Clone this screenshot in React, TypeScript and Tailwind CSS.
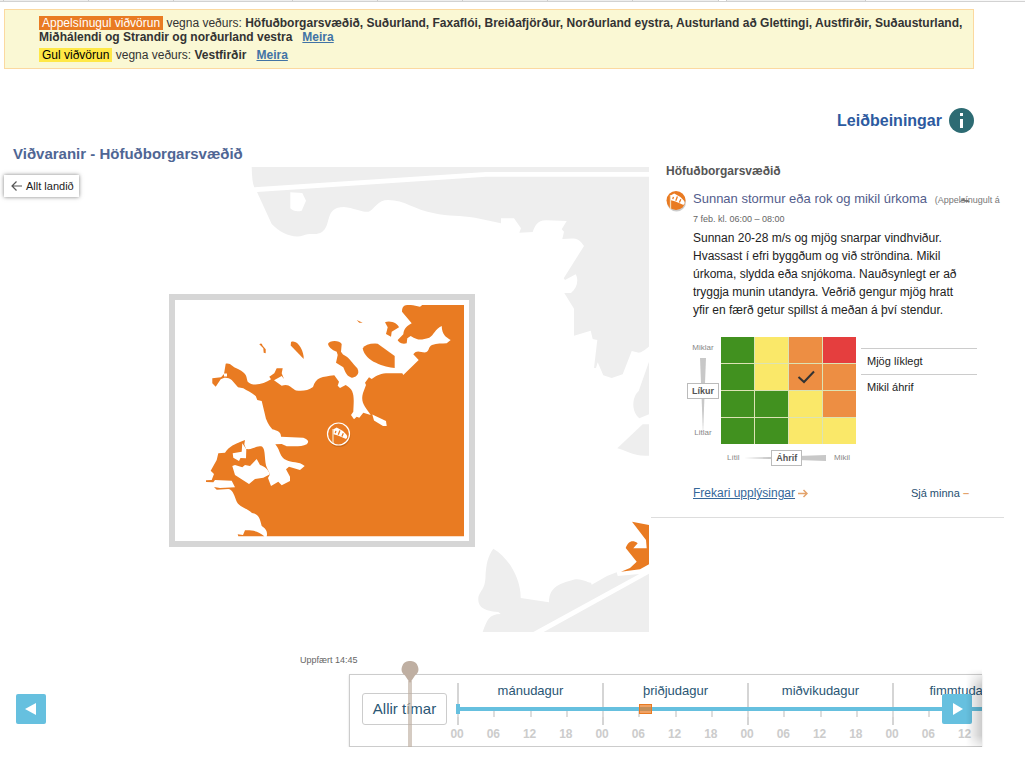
import { useState } from "react";
import clsx from "clsx";

const DAYS = ["mánudagur", "þriðjudagur", "miðvikudagur", "fimmtudagur"];
const HOURS = ["00", "06", "12", "18"];

// risk matrix, top row = most likely
const MATRIX = [
  ["g", "y", "o", "r"],
  ["g", "y", "o", "o"],
  ["g", "g", "y", "o"],
  ["g", "g", "y", "y"],
];

const RISK_COLORS: Record<string, string> = {
  g: "bg-[#41911f]",
  y: "bg-[#fae869]",
  o: "bg-[#ed8e43]",
  r: "bg-[#e53e3e]",
};

const TABS = [
  "w-[4px]",
  "w-[85px]",
  "w-[85px]",
  "w-[119px]",
  "w-[85px]",
  "w-[85px]",
  "w-[85px]",
  "w-[85px]",
  "w-[86px]",
];

function Windsock() {
  return (
    <g>
      <path d="M-5.500 -5V9" stroke="#f5dcb8" strokeWidth="1.300" />
      <path d="M-5 -4.800L-1.800 -6.400Q4 -4 8 .8C9.200 2.400 8.800 4.800 7 4.800L-.5 1.600L-5 .2Z" fill="#fff" />
      <path d="M-2.600 -3.200L-3.200 -.8M1.400 -3.400L-.2 .8M4.800 -.8L3.400 2.600" stroke="#e97b22" strokeWidth="1.300" />
    </g>
  );
}

function TopTabs() {
  return (
    <div className="-mt-1 flex h-[6px] overflow-hidden border-b border-[#d2d2d2] bg-[#f8f8f8]">
      {TABS.map((w, i) => (
        <div key={i} className={clsx("h-full shrink-0 border-r border-[#ccc] bg-[#eee]", w)} />
      ))}
      <div className="w-[8px] shrink-0 border-r border-[#ccc] bg-white" />
      <div className="w-[139px] shrink-0 border-r border-[#ccc] bg-[#eee]" />
    </div>
  );
}

function Alerts() {
  return (
    <div className="mt-[7px] mr-[51px] ml-1 border border-[#fbd9a0] bg-[#faf8d4] py-[6px] pl-[34px] pr-2 text-[12px] leading-[14px] text-[#333]">
      <p>
        <span className="bg-[#e97b22] px-[3px] text-white">Appelsínugul viðvörun</span> vegna veðurs:{" "}
        <b>
          Höfuðborgarsvæðið, Suðurland, Faxaflói, Breiðafjörður, Norðurland eystra, Austurland að Glettingi,
          Austfirðir, Suðausturland, Miðhálendi og Strandir og norðurland vestra
        </b>
        <a href="#orange" className="ml-[10px] font-bold text-[#4173a5] underline">
          Meira
        </a>
      </p>
      <p className="mt-1">
        <span className="bg-[#ffe846] px-[3px] text-black">Gul viðvörun</span> vegna veðurs: <b>Vestfirðir</b>
        <a href="#yellow" className="ml-[10px] font-bold text-[#4173a5] underline">
          Meira
        </a>
      </p>
    </div>
  );
}

function RegionMap() {
  return (
    <svg viewBox="0 167 649 465" className="block h-auto w-full" role="img" aria-label="Höfuðborgarsvæðið">
      <g fill="#eeeeee">
        <path d="M251.700 167H649V172H486L254.300 187.300Q252 183 251.700 167Z" />
        <path
          fillRule="evenodd"
          d="M257 192L486 176.700H649V346.500C645 350 641 353 638 352.600L631.700 351L622.700 374.300L611.700 378L603.300 375.300L597.700 362.300L596 368H594L597.300 340L592.700 339L590.700 330.700L574 335.700V308.700L564.300 293H571C577 288 579 280 575.700 274.300L565 280L563.700 278.300L584 246C580 240 577 238.500 572 238.500L562.300 239L564 231.700L561.700 229.300L566.700 221L546.700 220.300C537 220 535 226 532.700 232L519.300 232.700L521 228.300L514 218.300H501V223.300L475 217.700C460 215 450 217 433 213C415 210 405 200 388 200C378 200 375 208 370 211C366 214 355 208 344 207C324 207 332 225 322 232C316 236 311 232 303 235.500C294 239 280 233 271.700 224Z M290.300 192.300L302.300 193L306 200.700L301.700 210.700C297 212 293 211 290.300 208.300Z"
        />
        <path d="M649 361.700L638.700 391C632 397 631 411 639.300 418.300L649 414.300Z" />
        <path d="M649 424.300H642.700L617.300 448.300C625 450 634 457 649 455.700Z" />
        <path d="M493.300 548.700C508 557 521 578 520.700 598L549 602.300C549 586 562 583 571 580.500C580 577 585 582 591 582.700L591.700 584.700L607 576L616.700 572.300L617.700 576L639.300 574L533.300 632H482.700C487 620 489 614 500.700 614L498.300 612C482 611 478 606 478.300 598C480 590 485 590 485.500 577C486 564 488 556 493.300 548.700Z" />
        <path d="M649 573.700L543.700 632H649Z" />
      </g>
      <path
        fill="#e97b22"
        d="M632 521.700L649 525V564.300L640 569.300L621 571.700L630 568L636.700 561.700L625.700 548C628 542 632 539 637.700 543.300L633.300 548.300H646.700L646 540Z"
      />

      {/* Inset with the capital region */}
      <rect x="172" y="297" width="300" height="247" fill="#fff" stroke="#d6d6d6" strokeWidth="6" />
      <g fill="#e97b22">
        <path d="M422.300 305H464V536.300H266.700C268 531 265 528 261.700 526C260 519 259 514 252 513C247 508 238 507 236 500C234 494 232 489 228.300 489L216.700 489.700L214 487L220 488L235 487.300L231.700 480.700L215 480L213.300 482.300L206 482V480.300L211.700 480L214 474L210.700 470.700L216.700 460L218.300 453.300L225 452.700C229 446 236 444 240 442L245 440L244.300 444.300L246 449C254 450 256 445 262 446.500C266 449 264 462 267 468L270 474.300L268 478L271 486L278.300 481.700L281.700 485.300L290 481V476.700L286 469.300L289 466.700L300 470L304.700 466C299 461 291 463 286.700 460.300C279 457 281 451 275.300 444.300L281.700 444L286.700 446.300C294 446 302 447 306.700 444.300C309 442 309 440 303.300 437.700L281 436.700C281 432 278 431 272.300 429.300C267 423 267 420 266 419L264.300 411.700L261.700 401L257.300 400L255.700 396C251 392 247 391 243.300 388.300L238 387.300L231.700 380C228 377 224 377 220.700 379.300L215.700 386.700L212.300 383.300V378.300L221 377.300L224 374L225.700 363.700C232 363 231 367 238 369C248 374 246 377 247.700 381.700C253 387 264 384 271 379.300L269.300 376.700L274.300 373.300L276.700 368.300L282.700 368.300L281.700 373.300L284 379L281.700 376L274 380.300L281.700 385.700C289 383 291 388 296 390.500C302 391 308 391 313 387C316 377 322 377 334.300 375.300L339 381.700L337.700 385.700L340 388L345.700 385C355 390 354 397 353.300 411.700L351 415L354 419.300L356.700 416.700L359.300 417.700L363.300 412.700L370.700 415C366 408 360 403 363 393L366 385L365 382.700L369 377.300L371.700 379C377 375 382 373 390 373.300H402.300L403.300 375L418.700 360L413.300 354.300C417 349 421 353 426 352.300C430 350 428 347 432 345C437 343 442 344 446.700 343.300L450.700 340C446 337 442 335 441.700 326C435 329 434 335 429.300 337.700C421 340 419 341 410.700 336L407.300 338.300L406.700 343.300C401 345 398 341 397.700 340L403.300 334.300C404 328 407 326 411.700 323.300L402 311.700C402 304 407 305 413 305.300L420 306.700Z" />
        <path d="M237.700 534.300L243 535L245 530.300C252 530 259 531 264.300 536.300H238.300Z" />
        <path d="M259.300 344.300Q262 342.500 262.500 345.500L265.700 349.300V353.300L263.700 352.700L263.300 348.300Z" />
        <path d="M291 342C297 339 304 350 303.700 359L290.700 345.500Z" />
        <path d="M328 344C329 340 340 340 341.700 344L341 351.700L343 354.500C349 357 353 364 357.300 368.300C361 375 354 378 351.700 377.700C347 376 346 374 343.300 367.300L336 362.700L337.700 355L336.700 351.700Q329 349 328 344Z" />
        <path d="M362.700 348.300Q366 343 377.700 343.700L394.700 356V368C385 367 365 362 362.700 348.300Z" />
        <path d="M385 322.300C391 320 398 324 399 327.300L391.700 331.700L391 336.700L386 334L387.700 327.300Z" />
        <path d="M356.700 320L362.700 322.700L359.300 322.700Z" />
      </g>
      <g fill="#fff">
        <path d="M242.300 443.300L246.300 449.300L246 458.300L240.500 458L239 461L233.300 457.700L232.700 453.300L241.700 451.700Z" />
        <path d="M232.300 466L235 465L242.300 467.300L245 465L250 466L256.700 459L260 465C264 466 268 469 270 474.300L263.300 477.700L255 479L249 484L235 475Z" />
        <path d="M372.300 414.500L386 421L386.700 426H383L374 420.500Z" />
        <path d="M224 373.500H227V376.500H224Z" />
      </g>
      <circle cx="339" cy="435.500" r="11.500" fill="#a85008" opacity=".4" />
      <circle cx="338.500" cy="434" r="11" fill="#e97b22" stroke="#fff" strokeWidth="1.200" />
      <g transform="translate(338.500 434)">
        <Windsock />
      </g>
    </svg>
  );
}

function RiskMatrix() {
  return (
    <div className="mt-[18px] ml-[35px] flex items-start">
      <div>
        <div className="flex gap-px">
          <div className="relative flex h-[107px] w-[34px] flex-col items-center justify-between py-[6px] text-[8px] leading-[10px] text-[#888]">
            <span>Miklar</span>
            <svg width="6" height="76" viewBox="0 0 6 76" className="absolute top-[21px]">
              <path d="M0 0H6L3 76Z" fill="#c8c8c8" />
            </svg>
            <b className="relative border border-[#bbb] bg-white px-1 py-[2px] text-[9px] text-[#555]">Líkur</b>
            <span className="relative">Litlar</span>
          </div>
          <div className="grid h-[107px] w-[135px] grid-cols-4 grid-rows-4 gap-px bg-[#dce3b4]">
            {MATRIX.map((row, y) =>
              row.map((risk, x) => (
                <div key={`${y}-${x}`} className={clsx("flex items-center justify-center", RISK_COLORS[risk])}>
                  {y === 1 && x === 2 && (
                    <svg width="18" height="14" viewBox="0 0 18 14" fill="none" stroke="#333" strokeWidth="2">
                      <path d="M1.500 7L7 12L17 1.500" />
                    </svg>
                  )}
                </div>
              )),
            )}
          </div>
        </div>
        <div className="relative mt-[6px] ml-[41px] flex h-4 w-[123px] items-center justify-between text-[8px] leading-[10px] text-[#888]">
          <span>Lítil</span>
          <svg width="82" height="6" viewBox="0 0 82 6" className="absolute left-[17px]">
            <path d="M0 3L82 0V6Z" fill="#c8c8c8" />
          </svg>
          <b className="relative border border-[#bbb] bg-white px-1 py-[2px] text-[9px] text-[#555]">Áhrif</b>
          <span>Mikil</span>
        </div>
      </div>
      <ul className="mt-[11px] ml-[5px] w-[116px] text-[11px] leading-[25px] text-[#222]">
        <li className="border-t border-[#ccc] pl-[6px]">Mjög líklegt</li>
        <li className="border-t border-[#ccc] pl-[6px]">Mikil áhrif</li>
      </ul>
    </div>
  );
}

function WarningPanel({ open, onToggle }: { open: boolean; onToggle: () => void }) {
  return (
    <section className="w-[353px] shrink-0 self-start border-b border-[#ddd]">
      <h2 className="pl-[15px] text-[12px] leading-4 font-bold text-[#555]">Höfuðborgarsvæðið</h2>
      <div className="mt-[10px] flex pl-[14px]">
        <svg width="22" height="24" viewBox="-11 -11 22 24" className="shrink-0">
          <circle cx="0.500" cy="2" r="9.500" fill="#999" opacity=".5" />
          <circle cx="0" cy="0.500" r="9.500" fill="#e97b22" />
          <Windsock />
        </svg>
        <h3 className="relative ml-[6px] text-[13px] leading-5 whitespace-nowrap text-[#535d8c]">
          Sunnan stormur eða rok og mikil úrkoma <small className="ml-1 text-[9px] text-[#777]">(Appelsínugult á</small>
          <svg width="11" height="5" viewBox="0 0 11 5" className="absolute top-[9px] left-[266px]">
            <path d="M0 4L5 0L6 2H9L11 4L7 4L5 3Z" fill="#777" />
          </svg>
        </h3>
      </div>
      <p className="pl-[42px] text-[9px] leading-[12px] text-[#666]">7 feb. kl. 06:00 – 08:00</p>
      {open && (
        <>
          <p className="mt-1 ml-[42px] max-w-[272px] text-[12px] leading-[18px] text-[#222]">
            Sunnan 20-28 m/s og mjög snarpar vindhviður. Hvassast í efri byggðum og við ströndina. Mikil úrkoma, slydda
            eða snjókoma. Nauðsynlegt er að tryggja munin utandyra. Veðrið gengur mjög hratt yfir en færð getur spillst
            á meðan á því stendur.
          </p>
          <RiskMatrix />
        </>
      )}
      <div className="mt-[18px] mb-[15px] flex items-center justify-between pr-[35px] pl-[42px]">
        <div className="flex items-center gap-[3px] text-[12px] leading-[18px]">
          <a href="#more" className="text-[#35679a] underline">
            Frekari upplýsingar
          </a>
          <svg width="10" height="9" viewBox="0 0 10 9" fill="none" stroke="#e3a36c" strokeWidth="1.500">
            <path d="M0 4.500H9M5.500 1L9 4.500L5.500 8" />
          </svg>
        </div>
        <button type="button" onClick={onToggle} className="text-[11px] leading-[18px] text-[#1f5070]">
          {open ? "Sjá minna" : "Sjá meira"} <span className="font-bold text-[#e3a36c]">–</span>
        </button>
      </div>
    </section>
  );
}

function Timeline() {
  return (
    <footer className="mt-[22px]">
      <p className="pl-[300px] text-[9px] leading-3 text-[#666]">Uppfært 14:45</p>
      <div className="relative mt-2 mr-[43px] flex items-start">
        <button
          type="button"
          aria-label="Fyrri"
          className="mt-5 ml-4 flex size-[30px] items-center justify-center rounded-xs bg-[#66c0df]"
        >
          <svg width="12" height="12" viewBox="0 0 12 12">
            <path d="M11 0V12L0 6Z" fill="#fff" />
          </svg>
        </button>
        <div className="ml-[303px] flex h-[73px] min-w-0 flex-1 items-start overflow-hidden border border-r-0 border-[#ccc] shadow-[0_1px_2px_rgba(0,0,0,0.15)]">
          <button
            type="button"
            className="mt-[18px] ml-3 h-[32px] w-[85px] shrink-0 rounded-[3px] border border-[#ccc] bg-white text-[15px] text-[#2a5674]"
          >
            Allir tímar
          </button>
          <div className="relative mt-2 ml-[10px] shrink-0">
            <div className="flex">
              {DAYS.map((day) => (
                <div key={day} className="h-[42px] w-[145px] border-l-2 border-[#d5d5d5]">
                  <p className="h-6 text-center text-[13px] leading-[15px] text-[#2a5674]">{day}</p>
                  <div className="-ml-[2px] h-1 bg-[#66c0df]" />
                  <div className="-ml-[2px] flex h-[6px]">
                    {HOURS.map((h) => (
                      <div key={h} className="flex-1 border-l-2 border-[#ddd]" />
                    ))}
                  </div>
                </div>
              ))}
            </div>
            <div className="mt-[2px] -ml-[18px] flex">
              {DAYS.map((day) => (
                <div key={day} className="flex w-[145px] text-center text-[12px] leading-[14px] font-bold text-[#ccc]">
                  {HOURS.map((h) => (
                    <span key={h} className="flex-1">
                      {h}
                    </span>
                  ))}
                </div>
              ))}
            </div>
            <div className="absolute top-[21px] left-[-1px] h-[10px] w-1 bg-[#66c0df]" />
            <div className="absolute top-[21px] left-[182px] h-[10px] w-[13px] border border-[#e97b22] bg-[#e97b22]/70" />
          </div>
        </div>
        <svg width="18" height="86" viewBox="0 0 18 86" className="pointer-events-none absolute top-[-13px] left-[401px]">
          <path d="M7 20H11V86H7Z" fill="#bfafa2" opacity=".65" />
          <path d="M9 0A8 8 0 0 1 14 14.500L9 22L4 14.500A8 8 0 0 1 9 0Z" fill="#bfafa2" />
        </svg>
        <button
          type="button"
          aria-label="Næsta"
          className="absolute top-5 right-[10px] flex size-[30px] items-center justify-center rounded-xs bg-[#66c0df] pl-px"
        >
          <svg width="12" height="12" viewBox="0 0 12 12">
            <path d="M1 0V12L11 6Z" fill="#fff" />
          </svg>
        </button>
        <div className="pointer-events-none absolute -top-[5px] right-0 h-[83px] w-4 bg-linear-to-r from-transparent to-black/20 mask-y-from-80%" />
      </div>
    </footer>
  );
}

export default function App() {
  const [open, setOpen] = useState(true);

  return (
    <div className="overflow-hidden bg-white font-['Liberation_Sans',Arial,sans-serif]">
      <TopTabs />
      <Alerts />
      <div className="mt-[39px] mr-[51px] flex justify-end">
        <a href="#help" className="flex items-center gap-[7px] text-[16px] leading-5 font-bold text-[#2c5aa0]">
          Leiðbeiningar
          <svg width="25" height="25" viewBox="0 0 25 25">
            <circle cx="12.500" cy="12.500" r="12.500" fill="#2d6b73" />
            <path d="M11 5H14V8H11ZM11 11H14V20H11Z" fill="#fff" />
          </svg>
        </a>
      </div>
      <h1 className="mt-3 pl-[13px] text-[15px] leading-[18px] font-bold text-[#4f6694]">
        Viðvaranir - Höfuðborgarsvæðið
      </h1>
      <main className="mr-[21px] flex gap-[2px]">
        <div className="relative mt-1 min-w-0 flex-1">
          <RegionMap />
          <button
            type="button"
            className="absolute top-2 left-1 flex h-[22px] w-[75px] items-center gap-1 bg-white pl-[7px] text-[11px] whitespace-nowrap text-[#222] shadow-[0_0_4px_rgba(0,0,0,0.5)]"
          >
            <svg width="11" height="10" viewBox="0 0 11 10" fill="none" stroke="#555" strokeWidth="1.200">
              <path d="M11 5H1M5.500 .5L1 5L5.500 9.500" />
            </svg>
            Allt landið
          </button>
        </div>
        <WarningPanel open={open} onToggle={() => setOpen(!open)} />
      </main>
      <Timeline />
    </div>
  );
}
